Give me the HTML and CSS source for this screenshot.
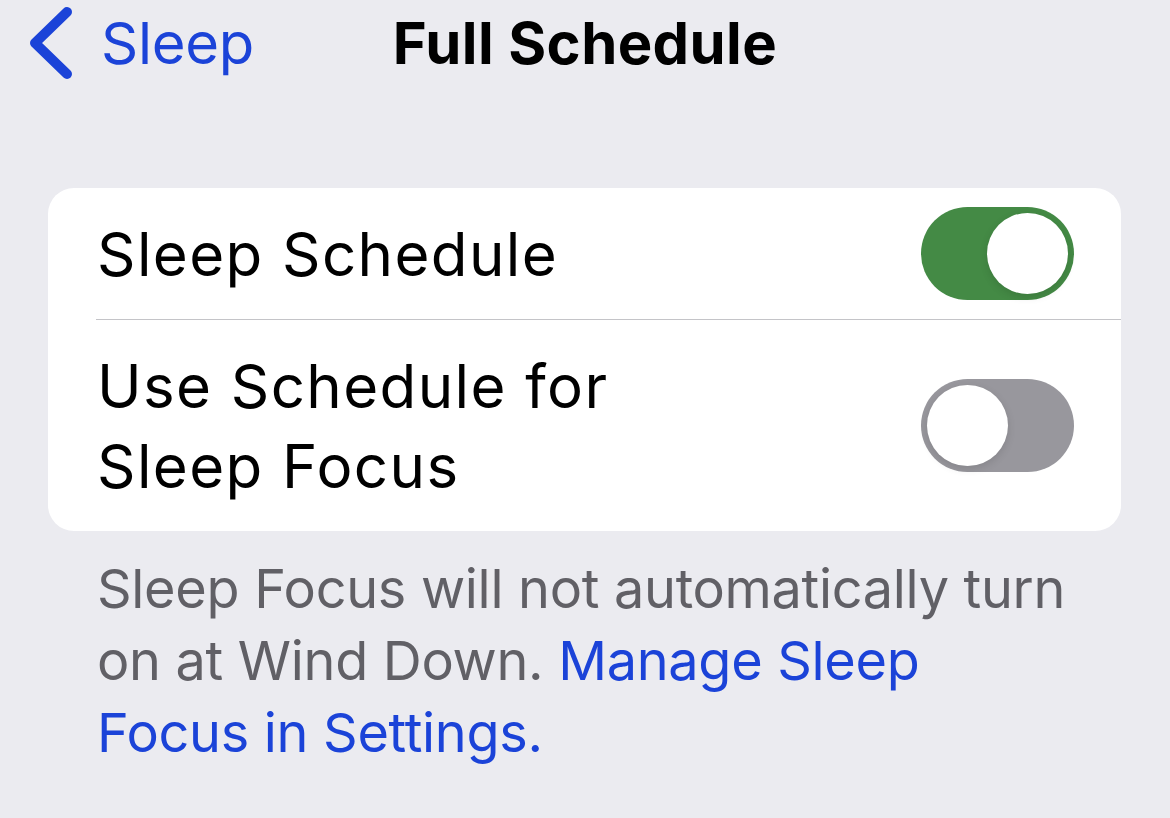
FILE: index.html
```html
<!DOCTYPE html>
<html lang="en">
<head>
<meta charset="utf-8">
<title>Full Schedule</title>
<link rel="stylesheet" href="styles.css">
</head>
<body>
<div class="screen">
  <header class="navbar">
    <a class="back" href="#">
      <svg class="chevron" width="44" height="72" viewBox="0 0 44 72" aria-hidden="true">
        <path d="M37 5 L5 36 L37 67" fill="none" stroke="#1b43d8" stroke-width="10" stroke-linecap="round" stroke-linejoin="round"/>
      </svg>
      <span class="back-label">Sleep</span>
    </a>
    <h1 class="title">Full Schedule</h1>
    <div class="spacer"></div>
  </header>

  <section class="group">
    <div class="row row-single">
      <span class="row-label">Sleep Schedule</span>
      <span class="toggle toggle-on"><span class="knob"></span></span>
    </div>
    <div class="separator"></div>
    <div class="row row-double">
      <span class="row-label">Use Schedule for<br>Sleep Focus</span>
      <span class="toggle toggle-off"><span class="knob"></span></span>
    </div>
  </section>

  <p class="footer">Sleep Focus will not automatically turn on at Wind Down. <a class="link" href="#">Manage Sleep Focus in Settings.</a></p>
</div>
</body>
</html>
```
FILE: styles.css
```css
html, body {
  margin: 0;
  padding: 0;
}
body {
  background: #ebebf0;
  font-family: Inter, "Noto Sans", "Liberation Sans", sans-serif;
  color: #000;
  width: 1170px;
  height: 818px;
  overflow: hidden;
}
.screen {
  display: flex;
  flex-direction: column;
}
.navbar {
  display: grid;
  grid-template-columns: 1fr auto 1fr;
  align-items: center;
  height: 86px;
  padding: 0 30px;
}
.back {
  display: flex;
  align-items: center;
  gap: 27px;
  text-decoration: none;
  color: #1b43d8;
}
.chevron {
  display: block;
}
.back-label {
  font-size: 58px;
  letter-spacing: -0.3px;
}
.title {
  margin: 0;
  font-size: 58px;
  font-weight: 700;
  letter-spacing: 0.4px;
}
.group {
  margin: 102px 49px 0 48px;
  background: #fff;
  border-radius: 26px;
  display: flex;
  flex-direction: column;
}
.row {
  display: flex;
  align-items: center;
  justify-content: space-between;
  padding: 0 47px 0 49px;
}
.row-single {
  height: 131px;
}
.row-double {
  height: 211px;
}
.row-label {
  font-size: 60px;
  line-height: 80px;
  letter-spacing: 1.4px;
}
.separator {
  height: 1px;
  background: #c4c4c8;
  margin-left: 48px;
}
.toggle {
  position: relative;
  width: 153px;
  height: 93px;
  border-radius: 47px;
  flex-shrink: 0;
}
.toggle-on {
  background: #448a45;
}
.toggle-off {
  background: #98979d;
}
.knob {
  position: absolute;
  top: 6px;
  width: 81px;
  height: 81px;
  border-radius: 50%;
  background: #fff;
  box-shadow: 0 3px 8px rgba(0,0,0,0.12);
}
.toggle-on .knob {
  right: 6px;
}
.toggle-off .knob {
  left: 6px;
}
.footer {
  margin: 22px 95px 0 97px;
  font-size: 54px;
  line-height: 72px;
  color: #616066;
  letter-spacing: -0.3px;
}
.link {
  color: #1b43d8;
  text-decoration: none;
}
```
